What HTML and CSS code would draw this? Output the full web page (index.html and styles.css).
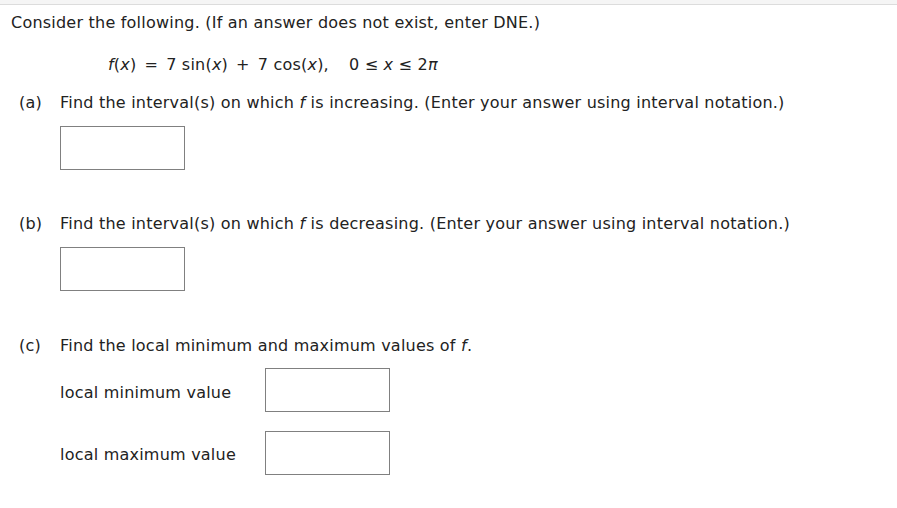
FILE: index.html
```html
<!DOCTYPE html>
<html>
<head>
<meta charset="utf-8">
<link rel="stylesheet" href="styles.css">
</head>
<body>
<div class="topbar"></div>
<div class="question">
  <p class="intro">Consider the following. (If an answer does not exist, enter DNE.)</p>
  <p class="formula"><i>f</i>(<i>x</i>)<span class="op">=</span>7 sin(<i>x</i>)<span class="op">+</span>7 cos(<i>x</i>),<span class="sp"></span>0 ≤ <i>x</i> ≤ 2<i>π</i></p>

  <div class="part">
    <span class="label">(a)</span>
    <div class="body">
      <p class="prompt">Find the interval(s) on which <i>f</i> is increasing. (Enter your answer using interval notation.)</p>
      <div class="answer"></div>
    </div>
  </div>

  <div class="part">
    <span class="label">(b)</span>
    <div class="body">
      <p class="prompt">Find the interval(s) on which <i>f</i> is decreasing. (Enter your answer using interval notation.)</p>
      <div class="answer"></div>
    </div>
  </div>

  <div class="part">
    <span class="label">(c)</span>
    <div class="body">
      <p class="prompt">Find the local minimum and maximum values of <i>f</i>.</p>
      <div class="row first">
        <span class="rowlabel">local minimum value</span>
        <div class="answer"></div>
      </div>
      <div class="row">
        <span class="rowlabel">local maximum value</span>
        <div class="answer"></div>
      </div>
    </div>
  </div>
</div>
</body>
</html>
```

FILE: styles.css
```css
html, body {
  margin: 0;
  padding: 0;
  background: #ffffff;
}
body {
  font-family: "DejaVu Sans", Verdana, sans-serif;
  font-size: 16px;
  letter-spacing: 0.22px;
  color: #222222;
}
.topbar {
  height: 4px;
  background: #f5f5f5;
  border-bottom: 1px solid #dcdcdc;
}
.question {
  padding-left: 11px;
}
p {
  margin: 0;
  line-height: 20px;
}
.intro {
  margin-top: 8px;
}
.formula {
  margin-top: 22px;
  padding-left: 97px;
}
.op {
  display: inline-block;
  padding: 0 8px;
}
.sp {
  display: inline-block;
  width: 20px;
}
.part {
  display: flex;
  padding-left: 8px;
  margin-top: 18px;
}
.part + .part {
  margin-top: 44px;
}
.part + .part + .part {
  margin-top: 45px;
}
.label {
  width: 41px;
  flex: none;
  line-height: 20px;
}
.answer {
  width: 123px;
  height: 42px;
  border: 1px solid #808080;
  margin-top: 13px;
  background: #fff;
}
.row {
  display: flex;
  align-items: flex-start;
}
.row .answer {
  margin-top: 19px;
}
.row.first .answer {
  margin-top: 12px;
}
.rowlabel {
  width: 205px;
  flex: none;
  line-height: 20px;
  margin-top: 13px;
}
.row.first .rowlabel {
  margin-top: 27px;
}
.row:not(.first) .rowlabel {
  margin-top: 33px;
}
```
